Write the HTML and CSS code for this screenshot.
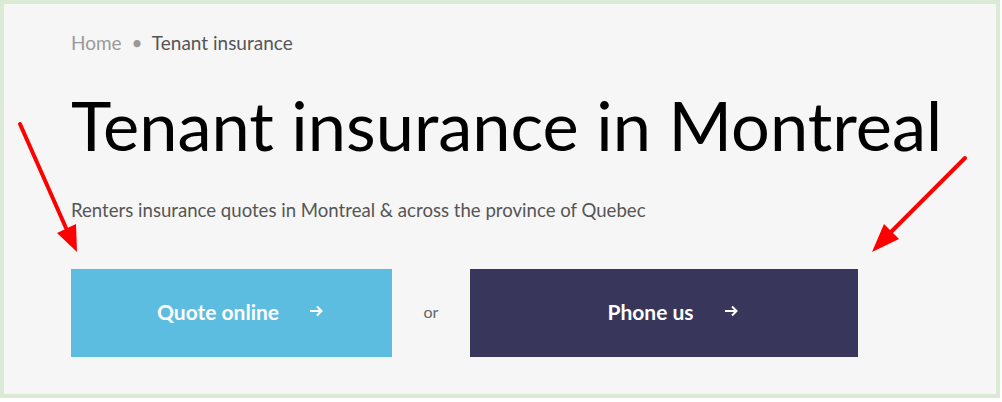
FILE: index.html
```html
<!DOCTYPE html>
<html lang="en">
<head>
  <meta charset="UTF-8" />
  <meta name="viewport" content="width=device-width, initial-scale=1.0"/>
  <title>Tenant insurance in Montreal</title>
  <link rel="stylesheet" href="styles.css">
</head>
<body>

  <div class="frame">
    <nav class="crumbs">
      <a href="#" class="crumb-home">Home</a>
      <span class="crumb-dot">&bull;</span>
      <span class="crumb-current">Tenant insurance</span>
    </nav>

    <h1>Tenant insurance in Montreal</h1>
    <p class="lead">Renters insurance quotes in Montreal &amp; across the province of Quebec</p>

    <div class="actions">
      <a href="#" class="btn btn-quote">
        Quote online
        <svg class="btn-arrow" width="15" height="12" viewBox="0 0 15 12"><path d="M1 6h12M8 1.5 12.5 6 8 10.5" fill="none" stroke="#fff" stroke-width="2"/></svg>
      </a>
      <span class="or">or</span>
      <a href="#" class="btn btn-phone">
        Phone us
        <svg class="btn-arrow" width="15" height="12" viewBox="0 0 15 12"><path d="M1 6h12M8 1.5 12.5 6 8 10.5" fill="none" stroke="#fff" stroke-width="2"/></svg>
      </a>
    </div>
  </div>

  <!-- annotation arrows -->
  <svg class="marks" width="1002" height="402" viewBox="0 0 1002 402">
    <line x1="20" y1="124" x2="66" y2="228" stroke="#f00" stroke-width="4" stroke-linecap="round"/>
    <polygon points="77,252 57,233 76,224" fill="#f00"/>
    <line x1="965" y1="158" x2="891" y2="232" stroke="#f00" stroke-width="4" stroke-linecap="round"/>
    <polygon points="872,252 884,224 899,239" fill="#f00"/>
  </svg>

</body>
</html>
```

FILE: styles.css
```css
body {
  margin: 0;
  background: #fff;
  font-family: 'Lato', 'Open Sans', sans-serif;
}

.frame {
  box-sizing: border-box;
  width: 1000px;
  height: 398px;
  border: 4px solid #dbead4;
  background: #f6f6f6;
  padding: 27px 0 0 67px;
}

.crumbs {
  font-size: 19px;
  line-height: 24px;
  color: #555;
}

.crumb-home {
  color: #9a9a9a;
  text-decoration: none;
}

.crumb-dot {
  color: #999;
  margin: 0 5px;
}

h1 {
  margin: 30px 0 0;
  font-size: 68.5px;
  line-height: 80px;
  font-weight: 400;
  color: #000;
}

.lead {
  margin: 33px 0 0;
  font-size: 18.6px;
  line-height: 24px;
  color: #555;
}

.actions {
  display: flex;
  align-items: center;
  margin-top: 47px;
}

.btn {
  box-sizing: border-box;
  display: flex;
  align-items: center;
  justify-content: center;
  height: 88px;
  padding: 0 0 4px 18px;
  color: #fff;
  font-size: 21px;
  font-weight: 700;
  text-decoration: none;
}

.btn-quote {
  width: 321px;
  background: #5dbde1;
}

.btn-phone {
  width: 388px;
  background: #38365a;
}

.btn-arrow {
  margin-left: 30px;
}

.or {
  width: 78px;
  padding-bottom: 4px;
  text-align: center;
  font-size: 16px;
  color: #666;
}

.marks {
  position: absolute;
  top: 0;
  left: 0;
  pointer-events: none;
}
```
